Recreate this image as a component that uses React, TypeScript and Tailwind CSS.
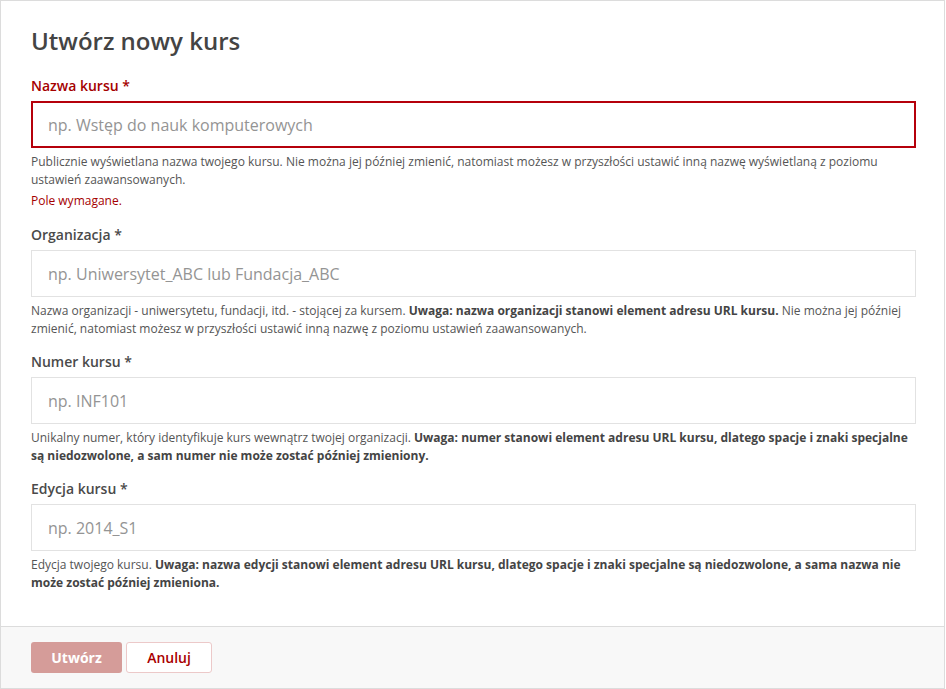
import React from "react";

const Field = ({
  label,
  placeholder,
  error,
  children,
}: {
  label: string;
  placeholder: string;
  error?: boolean;
  children: React.ReactNode;
}) => {
  const labelClass = error
    ? "block text-[14px] leading-[20px] font-semibold text-[#a50000]"
    : "block text-[14px] leading-[20px] font-semibold text-[#4a4a4a]";
  const boxClass = error
    ? "mt-[5px] h-[47px] border-2 border-[#b5000b] bg-white"
    : "mt-[5px] h-[47px] border border-[#e2e2e2] bg-white";
  return (
    <div>
      <label className={labelClass}>
        {label} <span>*</span>
      </label>
      <div className={boxClass}>
        <input
          type="text"
          placeholder={placeholder}
          className={
            error
              ? "block w-full h-full px-[15px] text-[16px] bg-transparent border-0 outline-none placeholder:text-[#949494]"
              : "block w-full h-full px-[16px] text-[16px] bg-transparent border-0 outline-none placeholder:text-[#949494]"
          }
        />
      </div>
      <div className="mt-[5px] text-[12px] leading-[18px] text-[#555]">{children}</div>
    </div>
  );
};

const App = () => {
  return (
    <div className="w-[945px] h-[689px] bg-white" style={{ fontFamily: '"Open Sans", "Liberation Sans", sans-serif' }}>
      <div className="h-full flex flex-col border border-[#dcdcdc]">
        <div className="flex-1 pt-[23px] pl-[30px] pr-[28px]">
          <h1 className="text-[24px] leading-[33px] font-semibold text-[#444]">Utwórz nowy kurs</h1>

          <div className="mt-[19px]">
            <Field label="Nazwa kursu" placeholder="np. Wstęp do nauk komputerowych" error>
              Publicznie wyświetlana nazwa twojego kursu. Nie można jej później zmienić, natomiast możesz w
              przyszłości ustawić inną nazwę wyświetlaną z poziomu ustawień zaawansowanych.
            </Field>
            <p className="mt-[3px] text-[12px] leading-[18px] text-[#a50000]">Pole wymagane.</p>
          </div>

          <div className="mt-[15px]">
            <Field label="Organizacja" placeholder="np. Uniwersytet_ABC lub Fundacja_ABC">
              Nazwa organizacji - uniwersytetu, fundacji, itd. - stojącej za kursem.{" "}
              <strong className="font-bold text-[#444]">Uwaga: nazwa organizacji stanowi element adresu URL kursu.</strong>{" "}
              Nie można jej później zmienić, natomiast możesz w przyszłości ustawić inną nazwę z poziomu ustawień
              zaawansowanych.
            </Field>
          </div>

          <div className="mt-[14px]">
            <Field label="Numer kursu" placeholder="np. INF101">
              Unikalny numer, który identyfikuje kurs wewnątrz twojej organizacji.{" "}
              <strong className="font-bold text-[#444]">
                Uwaga: numer stanowi element adresu URL kursu, dlatego spacje i znaki specjalne są niedozwolone, a
                sam numer nie może zostać później zmieniony.
              </strong>
            </Field>
          </div>

          <div className="mt-[14px]">
            <Field label="Edycja kursu" placeholder="np. 2014_S1">
              Edycja twojego kursu.{" "}
              <strong className="font-bold text-[#444]">
                Uwaga: nazwa edycji stanowi element adresu URL kursu, dlatego spacje i znaki specjalne są
                niedozwolone, a sama nazwa nie może zostać później zmieniona.
              </strong>
            </Field>
          </div>
        </div>

        <div className="h-[62px] border-t border-[#dcdcdc] bg-[#f8f8f8] pl-[30px] pt-[15px] flex items-start gap-[4px]">
          <button className="w-[91px] h-[31px] rounded-[3px] bg-[#d59c99] text-white text-[14px] font-bold">
            Utwórz
          </button>
          <button className="w-[86px] h-[31px] rounded-[3px] bg-white border border-[#ecc9c9] text-[#a90000] text-[14px] font-semibold">
            Anuluj
          </button>
        </div>
      </div>
    </div>
  );
};

export default App;
